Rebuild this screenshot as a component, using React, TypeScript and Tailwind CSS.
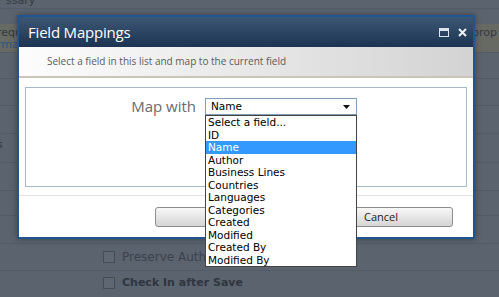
import React from "react";

const fields = [
  "Select a field...",
  "ID",
  "Name",
  "Author",
  "Business Lines",
  "Countries",
  "Languages",
  "Categories",
  "Created",
  "Modified",
  "Created By",
  "Modified By",
];

function PageBehind() {
  return (
    <div className="flex flex-col h-[297px] overflow-hidden bg-[#5b636e] text-[11px] text-[#343a42] font-['DejaVu_Sans',sans-serif]">
      <div className="h-[8px] relative overflow-hidden">
        <span className="absolute left-[6px] top-[-7px]">ssary</span>
      </div>
      <div className="h-[16px] border-t border-[#535b66]" />
      <div className="h-[28px] flex justify-between bg-[#676963]">
        <div className="flex flex-col -ml-[3px] leading-[12px] pt-[3px]">
          <span>requ</span>
          <span className="text-[#2d5786]">rma</span>
        </div>
        <span className="pt-[3px] pr-[2px] leading-[12px]">prop</span>
      </div>
      <div className="h-[26px] border-t border-[#535b66]" />
      <div className="h-[27px] border-t border-[#535b66]" />
      <div className="h-[28px] border-t border-[#535b66]" />
      <div className="h-[29px] border-t border-[#535b66] pt-[3px]">
        <span className="-ml-[3px]">s</span>
      </div>
      <div className="h-[28px] border-t border-[#535b66]" />
      <div className="h-[25px] border-t border-[#535b66]" />
      <div className="h-[28px] border-t border-[#535b66]" />
      <div className="h-[27px] border-t border-[#535b66] flex items-center pl-[103px] gap-[7px] text-[#3b424c] text-[12px]">
        <span className="w-[12px] h-[12px] border border-[#454c56] bg-[#5f6772]" />
        <span>Preserve Author</span>
      </div>
      <div className="flex-1 border-t border-[#535b66] flex items-center pl-[103px] gap-[7px] text-[#2f3640] font-bold text-[11px] pb-[2px]">
        <span className="w-[12px] h-[12px] border border-[#454c56] bg-[#5f6772]" />
        <span>Check In after Save</span>
      </div>
    </div>
  );
}

function Dialog() {
  return (
    <div className="absolute left-[17px] top-[15px] w-[458px] h-[224px] border-2 border-[#1f5590] bg-white flex flex-col shadow-[0_0_6px_rgba(0,0,0,0.35)]">
      <div className="h-[30px] flex items-center justify-between bg-gradient-to-b from-[#3c5775] to-[#1c3451] pl-[9px] pr-[6px]">
        <span className="text-white text-[15px] font-['Open_Sans',sans-serif] tracking-[-0.2px]">Field Mappings</span>
        <div className="flex items-center gap-[9px]">
          <span className="w-[10px] h-[9px] border border-[#dde4ec] border-t-[3px]" />
          <svg width="9" height="9" viewBox="0 0 9 9">
            <path d="M1 1 L8 8 M8 1 L1 8" stroke="#eef2f6" strokeWidth="2" />
          </svg>
        </div>
      </div>
      <div className="h-[31px] flex items-center pl-[28px] bg-gradient-to-r from-[#fdfdfd] to-[#d3d3d3] border-b-2 border-[#cbc5b8] text-[10px] text-[#5c5c5c] font-['Open_Sans',sans-serif]">
        Select a field in this list and map to the current field
      </div>
      <div className="mx-[6px] mt-[9px] h-[100px] border border-[#a7b8ca] pt-[10px] flex items-start">
        <span className="w-[170px] text-right text-[15px] leading-[17px] text-[#6a6a6a] font-['Open_Sans',sans-serif]">
          Map with
        </span>
        <div className="relative ml-[9px]">
          <div className="w-[152px] h-[17px] border border-[#7f9db9] flex items-center justify-between pl-[5px] pr-[6px] text-[10.5px] text-black font-['DejaVu_Sans',sans-serif]">
            <span>Name</span>
            <svg width="7" height="4" viewBox="0 0 7 4">
              <path d="M0 0 L7 0 L3.5 4 Z" fill="#111" />
            </svg>
          </div>
          <div className="absolute left-0 top-[17px] w-[152px] border border-[#444] bg-white flex flex-col text-[10.5px] leading-[12.5px] text-black font-['DejaVu_Sans',sans-serif] z-10">
            {fields.map((f) => (
              <div
                key={f}
                className={
                  f === "Name"
                    ? "pl-[2px] bg-[#3399ff] text-white"
                    : "pl-[2px]"
                }
              >
                {f}
              </div>
            ))}
          </div>
        </div>
      </div>
      <div className="mt-[8px] border-t border-[#e2e2e2]" />
      <div className="flex justify-end gap-[10px] pr-[20px] pt-[11px]">
        <button className="w-[144px] h-[20px] rounded-[3px] border border-[#8c8c8c] bg-gradient-to-b from-[#f7f7f7] to-[#d5d5d5] text-[11px] text-[#222] font-['Open_Sans',sans-serif]">
          OK
        </button>
        <button className="w-[144px] h-[20px] rounded-[3px] border border-[#8c8c8c] bg-gradient-to-b from-[#f7f7f7] to-[#d5d5d5] text-[11px] text-[#222] font-['Open_Sans',sans-serif]">
          Cancel
        </button>
      </div>
    </div>
  );
}

export default function App() {
  return (
    <div className="relative w-[499px] h-[297px] overflow-hidden">
      <PageBehind />
      <Dialog />
    </div>
  );
}
